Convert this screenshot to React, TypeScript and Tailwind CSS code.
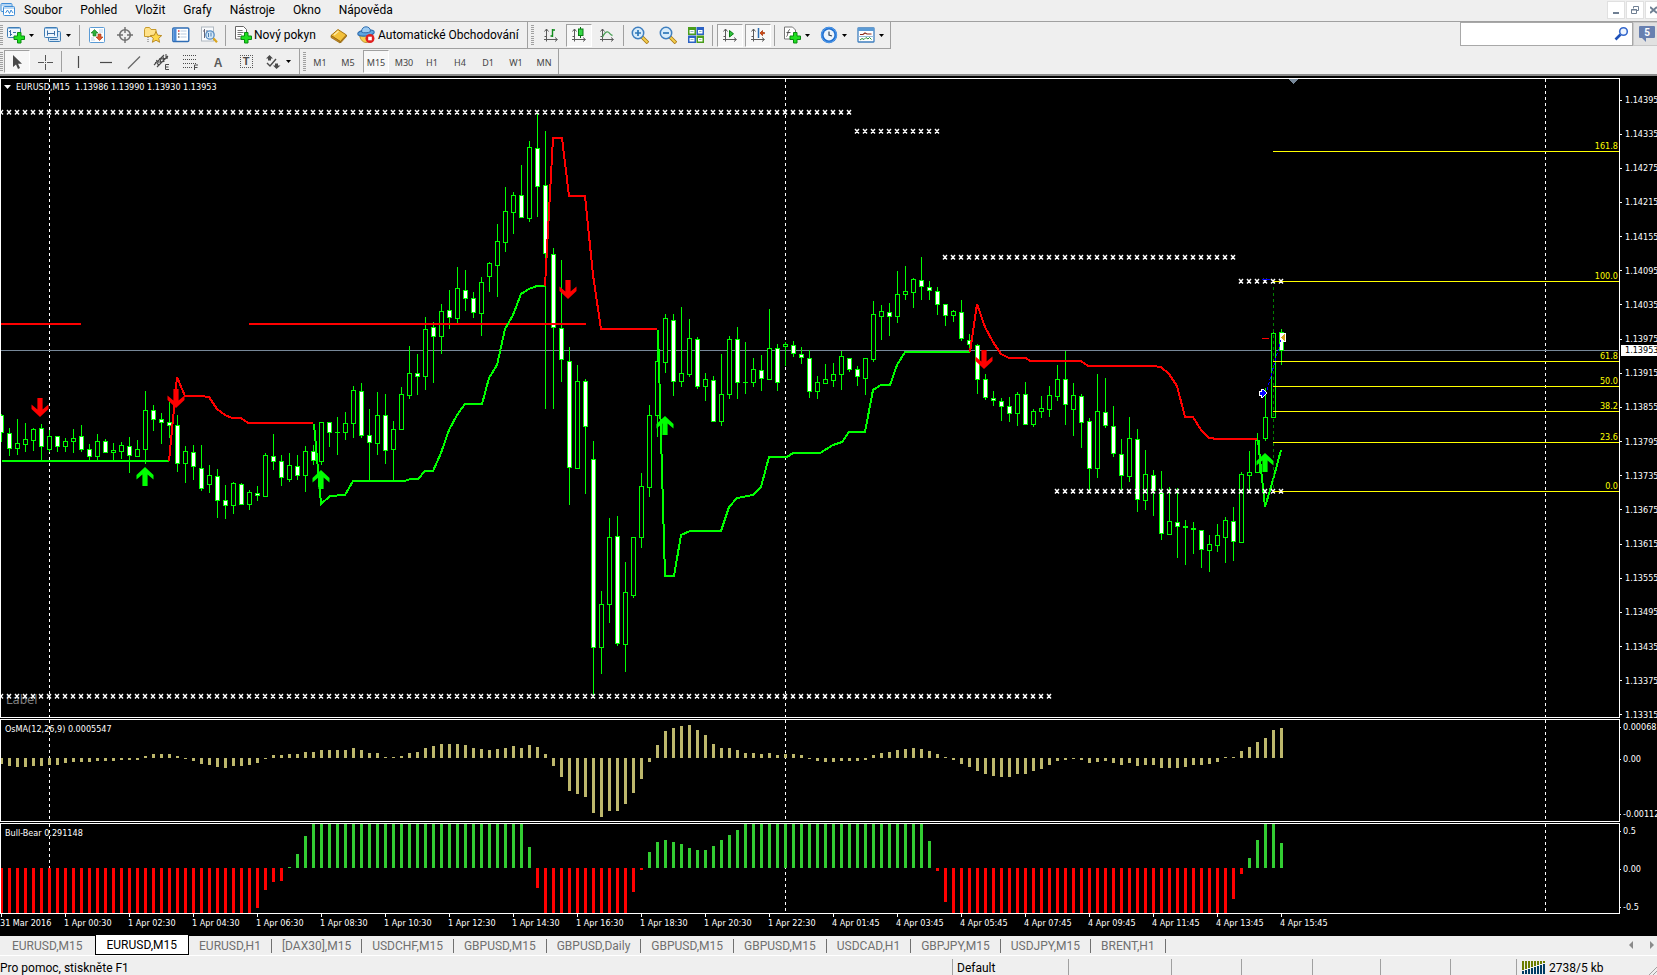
import { ReactNode } from "react";

/* ---------- chart data ---------- */

const STEP = 8;
const barX = (i: number) => 1 + i * STEP;

// high, body top, body bottom, low, bearish
const CANDLES: number[][] = [
  [414,415,432,441,1],[428,433,448,455,1],[419,443,448,454,0],[423,439,444,451,0],[428,429,440,450,0],
  [424,428,446,460,1],[430,436,449,451,0],[436,436,446,451,1],[438,441,446,451,0],[429,438,441,452,0],
  [425,436,449,451,1],[444,449,456,460,1],[434,441,456,460,0],[439,441,452,452,1],[443,450,452,459,0],
  [442,445,451,458,0],[437,446,455,472,1],[440,449,456,456,0],[391,410,449,463,0],[405,410,419,430,1],
  [413,419,422,443,1],[402,422,425,437,1],[415,425,463,471,1],[446,451,463,482,0],[445,452,466,479,1],
  [445,468,488,490,1],[465,475,484,492,0],[469,476,500,517,1],[485,500,505,518,1],[482,483,505,513,0],
  [483,484,504,504,1],[490,492,504,509,0],[486,493,495,500,1],[453,455,496,496,0],[434,456,461,469,1],
  [455,461,477,485,1],[453,465,479,481,0],[455,466,475,479,1],[446,451,475,491,0],[445,451,460,464,1],
  [422,422,461,464,0],[422,422,432,446,1],[417,432,432,454,0],[412,423,432,439,0],[386,390,423,437,0],
  [383,391,435,437,1],[409,435,442,481,1],[392,415,443,454,0],[394,415,450,463,1],[421,429,449,481,0],
  [387,394,429,429,0],[346,373,395,398,0],[354,373,376,394,1],[317,329,376,389,0],[322,327,336,382,1],
  [304,311,336,353,0],[290,310,317,328,1],[267,288,318,323,0],[270,290,298,310,1],[292,298,312,317,1],
  [277,282,313,335,0],[262,263,276,291,0],[224,241,265,296,0],[187,211,242,251,0],[192,195,212,233,0],
  [165,195,217,217,1],[141,147,218,221,0],[113,148,186,216,1],[131,185,253,408,1],[248,254,327,408,1],
  [260,328,359,381,1],[347,361,467,504,1],[365,381,468,468,0],[379,381,426,493,1],[441,459,647,696,1],
  [591,604,647,673,0],[518,537,604,622,0],[516,536,643,645,1],[562,592,644,671,0],[537,537,595,597,0],
  [473,486,537,547,0],[405,415,487,496,0],[345,361,415,436,0],[314,318,362,372,0],[314,320,381,395,1],
  [307,373,381,386,0],[319,338,374,376,0],[337,339,386,388,1],[373,379,386,400,0],[376,380,421,421,1],
  [354,394,421,425,0],[336,339,394,398,0],[327,339,382,398,1],[342,382,382,393,0],[358,369,382,386,0],
  [355,370,378,390,1],[309,348,379,379,0],[344,348,382,390,1],[342,344,346,365,0],[341,345,353,356,1],
  [347,354,357,363,1],[350,358,391,397,1],[376,382,391,398,0],[364,379,383,383,0],[363,374,380,386,0],
  [351,356,374,389,0],[358,358,369,371,1],[366,369,376,385,1],[358,358,378,394,0],[301,314,359,361,0],
  [305,311,316,339,0],[303,312,316,335,1],[271,294,316,322,0],[266,291,294,299,0],[278,279,292,307,0],
  [257,280,286,299,1],[281,287,290,299,1],[287,291,304,314,1],[304,304,315,325,1],[310,311,315,321,0],
  [300,312,338,340,1],[334,340,344,352,1],[344,345,379,393,1],[374,379,397,399,1],[391,398,400,405,1],
  [398,401,406,420,1],[397,406,413,421,1],[392,394,413,425,0],[382,394,424,424,1],[409,411,424,426,0],
  [396,408,411,417,0],[386,395,409,416,0],[365,379,396,400,0],[351,379,404,424,1],[383,395,409,435,0],
  [394,396,422,447,1],[418,421,468,490,1],[374,411,468,477,0],[378,412,425,427,1],[406,426,453,456,1],
  [439,454,475,490,1],[417,438,476,481,0],[429,439,499,511,1],[450,474,500,509,0],[470,475,490,515,1],
  [471,493,533,539,1],[487,521,534,534,0],[488,522,526,557,1],[520,526,527,564,0],[522,528,529,553,0],
  [530,530,549,567,1],[535,544,550,571,0],[524,535,545,551,0],[517,520,537,562,0],[507,521,541,560,1],
  [472,474,542,542,0],[451,472,475,489,0],[433,440,472,472,0],[388,417,438,440,0],[332,333,417,417,0],
  [329,332,350,364,1],
];

const OSMA: number[] = [
  -6,-8,-9,-9,-8,-8,-7,-7,-5,-4,-4,-4,-3,-3,-3,-2,-2,-2,2,4,4,4,2,-1,-3,-6,-7,-9,-10,-8,-8,-7,-5,-1,3,3,4,4,6,6,
  8,8,8,8,10,8,5,5,1,1,2,5,6,10,12,14,14,14,13,10,9,8,9,10,12,10,13,11,4,-8,-19,-33,-36,-39,-55,-59,-53,-53,-46,-35,
  -21,-4,13,27,30,32,33,28,23,14,10,10,8,5,5,4,5,3,4,4,3,-1,-3,-4,-4,-3,-3,-3,-2,3,5,6,8,9,10,9,7,4,1,-2,
  -6,-9,-13,-16,-18,-19,-19,-16,-16,-13,-11,-7,-3,-2,-1,-2,-5,-4,-3,-5,-7,-5,-8,-7,-7,-10,-10,-10,-9,-7,-7,-6,-4,1,1,7,
  11,16,20,28,30,
];

const fill = (n: number, v: number) => Array<number>(n).fill(v);
const BULL_BEAR: number[] = [
  ...fill(32, -45), -40, -22, -14, -13, 1, 14, 32, ...fill(27, 44), 21, -20, ...fill(11, -45), -24, -2,
  16, 26, 28, 26, 24, 20, 18, 18, 22, 28, 33, 38, ...fill(23, 44), 27, -3, -34, ...fill(35, -45), -31, -6,
  10, 28, 44, 44, 25,
];

const TREND: { color: string; points: string }[] = [
  { color: "#00ff00", points: "2,461 169,461" },
  { color: "#ff0000", points: "169,461 177,377 185,396 201,396 209,397 217,409 225,415 232,418 241,418 248,423 313,423" },
  { color: "#00ff00", points: "314,424 321,504 330,496 345,495 353,481 405,481 410,479 418,479 425,471 433,471 441,453 449,430 457,415 465,404 482,404 489,378 497,365 505,329 513,315 521,294 529,289 537,286 545,286" },
  { color: "#ff0000", points: "545,286 553,138 562,138 569,196 585,196 593,275 601,329 657,329" },
  { color: "#00ff00", points: "658,330 665,576 674,576 681,535 690,531 721,531 729,507 737,498 753,495 761,487 769,457 787,457 793,453 820,453 833,445 842,442 849,432 865,432 873,390 881,385 890,385 897,365 905,352 969,352" },
  { color: "#ff0000", points: "970,352 977,304 985,327 993,342 1001,354 1009,358 1026,358 1030,361 1081,361 1088,366 1153,366 1161,367 1169,374 1177,386 1185,417 1193,417 1201,430 1209,438 1218,439 1257,439" },
  { color: "#00ff00", points: "1258,440 1265,507 1273,480 1281,450" },
];

// y, first x, last x
const CROSS_ROWS = [
  [112, 1, 849],
  [131, 857, 937],
  [257, 945, 1233],
  [281, 1241, 1281],
  [696, 1, 1049],
  [491, 1057, 1281],
];

const FIB: [number, string][] = [
  [151, "161.8"], [281, "100.0"], [361, "61.8"], [386, "50.0"], [411, "38.2"], [442, "23.6"], [491, "0.0"],
];

const SIGNALS: [number, number, "up" | "down"][] = [
  [40, 398, "down"], [176, 389, "down"], [568, 280, "down"], [984, 350, "down"],
  [145, 467, "up"], [321, 470, "up"], [665, 416, "up"], [1265, 453, "up"],
];

const PRICES = Array.from({ length: 19 }, (_, i) => (1.14395 - i * 0.0006).toFixed(5));

const TIMES = [
  "31 Mar 2016", "1 Apr 00:30", "1 Apr 02:30", "1 Apr 04:30", "1 Apr 06:30", "1 Apr 08:30", "1 Apr 10:30",
  "1 Apr 12:30", "1 Apr 14:30", "1 Apr 16:30", "1 Apr 18:30", "1 Apr 20:30", "1 Apr 22:30", "4 Apr 01:45",
  "4 Apr 03:45", "4 Apr 05:45", "4 Apr 07:45", "4 Apr 09:45", "4 Apr 11:45", "4 Apr 13:45", "4 Apr 15:45",
];

const DAY_LINES = [48, 784, 1544];

/* ---------- chart drawing ---------- */

function DayLines() {
  return (
    <>
      {DAY_LINES.map((x) => (
        <line key={x} x1={x + 0.5} x2={x + 0.5} y1="0" y2="100%" stroke="#fff" strokeDasharray="3 3" />
      ))}
    </>
  );
}

function PriceChart() {
  return (
    <svg className="block h-full w-full" shapeRendering="crispEdges" role="img" aria-label="EURUSD M15">
      <DayLines />
      <text x="5" y="625" fontSize="13" fill="#808080">Label</text>
      <g transform="translate(-1 -79)">
        <line x1="0" x2="100%" y1="350.5" y2="350.5" stroke="#778899" />
        {CANDLES.map(([h, t, b, l, bear], i) => {
          const x = barX(i);
          return (
            <g key={i} stroke="#00ff00">
              <line x1={x + 0.5} x2={x + 0.5} y1={h} y2={l + 1} />
              {b > t ? (
                <rect x={x - 1.5} y={t + 0.5} width="4" height={b - t} fill={bear ? "#fff" : "#000"} />
              ) : (
                <line x1={x - 2} x2={x + 3} y1={t + 0.5} y2={t + 0.5} />
              )}
            </g>
          );
        })}
        <path d="M1 324H81M249 324H586" stroke="#ff0000" strokeWidth="2" />
        {TREND.map((l) => (
          <polyline key={l.points} points={l.points} fill="none" stroke={l.color} strokeWidth="2" />
        ))}
        {SIGNALS.map(([x, y, dir]) => (
          <path
            key={x}
            shapeRendering="auto"
            transform={dir === "up" ? `translate(${x} ${y})` : `translate(${x} ${y + 19}) scale(1 -1)`}
            d="M0 0L8.5 8V12.5L2.6 7.5V19H-2.6V7.5L-8.5 12.5V8Z"
            fill={dir === "up" ? "#00ff00" : "#ff0000"}
          />
        ))}
        <line x1="1273.5" x2="1273.5" y1="281" y2="491" stroke="#008000" strokeDasharray="3 3" />
        {FIB.map(([y, label]) => (
          <g key={label}>
            <svg x="1273" y={y} width="100%" height="1" overflow="hidden">
              <rect width="100%" height="1" fill="#ffff00" />
            </svg>
            <text x="100%" y={y - 2} textAnchor="end" fontSize="9" fill="#ffff00">{label}</text>
          </g>
        ))}
        {CROSS_ROWS.map(([y, from, to]) => {
          const xs: number[] = [];
          for (let x = from; x <= to; x += STEP) xs.push(x);
          return (
            <path
              key={y}
              shapeRendering="auto"
              d={xs.map((x) => `M${x - 2} ${y - 2}l4 4.500M${x + 2} ${y - 2}l-4 4.500`).join("")}
              stroke="#fff"
              strokeWidth="1.4"
            />
          );
        })}
        <path d="M1262 338.5h7" stroke="#ff0000" />
        <path d="M1262 279.5h8" stroke="#0000ff" />
        <path d="M1267 390L1281 340" stroke="#0000ff" strokeDasharray="3 2" />
        <path d="M1259 391h2v-2h2l4 4-4 4h-2v-2h-2z" fill="#0000ff" stroke="#fff" />
        <path d="M1281 333h5v9h-5z" fill="#fff" />
        <path d="M1285 334v7l-4-3.500z" fill="#daa520" />
        <path d="M1289 79h9l-4.500 5z" fill="#778899" />
      </g>
    </svg>
  );
}

function Histogram({ values, zero, up, down, label }: { values: number[]; zero: number; up: string; down: string; label: string }) {
  return (
    <svg className="block h-full w-full" shapeRendering="crispEdges" role="img" aria-label={label}>
      <DayLines />
      {values.map((v, i) => (
        <rect
          key={i}
          x={barX(i) - 2}
          y={v > 0 ? zero - v : zero}
          width="3"
          height={Math.abs(v)}
          fill={v > 0 ? up : down}
        />
      ))}
    </svg>
  );
}

/* ---------- toolbar icons ---------- */

function Ico({ children, size = 18 }: { children: ReactNode; size?: number }) {
  return (
    <svg width={size} height={size} viewBox="0 0 18 18" fill="none" className="shrink-0" aria-hidden="true">
      {children}
    </svg>
  );
}

const Plus = () => (
  <path d="M10.500 6.500h3.500v3.500h3.500v3.500h-3.500v3.500h-3.500v-3.500h-3.500v-3.500h3.500z" fill="#1fe01f" stroke="#0a8a12" />
);
const Axes = () => (
  <path d="M4.500 3v12.500M2 13.500h13M2.500 5.500l2-2.500 2 2.500M13 11.500l2.500 2-2.500 2M2.500 10.500h2" stroke="#5a5a5a" />
);

const icons: Record<string, ReactNode> = {
  newChart: (
    <Ico>
      <rect x=".5" y="1.500" width="13" height="10" rx="1" fill="#eef6fd" stroke="#3f7db5" />
      <path d="M1 2.500h12" stroke="#8fb9e0" />
      <path d="M3.500 4v6M2 5.500h1.500M3.500 8.500H5M6 6.500h3" stroke="#3b6ea5" />
      <Plus />
    </Ico>
  ),
  profiles: (
    <Ico>
      <rect x="4.500" y="5.500" width="12" height="10" rx="1" fill="#d4e6f6" stroke="#3f7db5" />
      <rect x=".5" y="1.500" width="13" height="10" rx="1" fill="#eef6fd" stroke="#3f7db5" />
      <path d="M1 2.500h12" stroke="#8fb9e0" />
      <path d="M3.500 4.500v5M3.500 7.500h7M10.500 5v4.500M6 13.500h8" stroke="#3b6ea5" />
    </Ico>
  ),
  market: (
    <Ico>
      <rect x="1.500" y="1.500" width="15" height="15" rx="1" fill="#fff" stroke="#5b9bd5" />
      <path d="M6.500 3.500l3.500 3.500H8v3H5V7H3z" fill="#2fae3a" stroke="#14781d" strokeWidth=".6" />
      <path d="M11.500 14.500L15 11h-2V8h-3v3H8z" fill="#e2572b" stroke="#a5320f" strokeWidth=".6" />
      <path d="M11 4h4M11 6h4M3 12h3M3 14h4" stroke="#bcd3ea" />
    </Ico>
  ),
  target: (
    <Ico>
      <circle cx="9" cy="9" r="5.300" stroke="#707070" strokeWidth="1.600" />
      <path d="M9 1v6M9 11v6M1 9h6M11 9h6" stroke="#707070" strokeWidth="1.400" />
    </Ico>
  ),
  favorites: (
    <Ico>
      <path d="M.5 3.500l1-2h4l1.500 2h5v7h-11.500z" fill="#ffe28a" stroke="#c79a2c" />
      <path d="M4 11v6" stroke="#666" strokeDasharray="1 1" />
      <path d="M12 5.500l1.700 3.700 4 .4-3 2.700.9 4-3.600-2.100-3.600 2.100.9-4-3-2.700 4-.4z" fill="#ffd84a" stroke="#b5831a" strokeWidth=".9" />
    </Ico>
  ),
  list: (
    <Ico>
      <rect x=".8" y="2" width="16" height="13.500" rx="1" fill="#fff" stroke="#2f6db5" strokeWidth="1.400" />
      <path d="M3 2.500v12.500" stroke="#4b8ad6" strokeWidth="3" />
      <path d="M6 5h1.500" stroke="#e03131" strokeWidth="1.500" />
      <path d="M6 8h1.500M6 11h1.500" stroke="#222" />
      <path d="M8.500 5h6M8.500 8h6M8.500 11h6" stroke="#b9cbe0" />
    </Ico>
  ),
  tester: (
    <Ico>
      <rect x="1.500" y="1" width="12" height="14" fill="#f8fafc" stroke="#b0b8c0" />
      <path d="M4.500 3v9M3 5h1.500M7 4v4" stroke="#667" />
      <circle cx="10" cy="9" r="4.200" fill="#cfe5f8" fillOpacity=".85" stroke="#5b8fc4" strokeWidth="1.300" />
      <path d="M8.500 7v4M11 6.500v4" stroke="#4b7db0" />
      <path d="M13.300 12.300l3.700 4" stroke="#d9a520" strokeWidth="2.200" />
    </Ico>
  ),
  order: (
    <Ico>
      <path d="M1.500.5h8l3 3V13h-11z" fill="#fff" stroke="#666" />
      <path d="M3.500 4.500h5M3.500 6.500h6M3.500 8.500h4M3.500 10.500h3" stroke="#777" />
      <Plus />
    </Ico>
  ),
  book: (
    <Ico>
      <path d="M1 9.500L8 3.500l8.500 5.500-6 6.500z" fill="#f3c13a" stroke="#a87512" />
      <path d="M1 9.500v2l9 5.500v-1.500zM10.500 15.500v1.500l6-6.500V9z" fill="#c98a1a" stroke="#8f6410" strokeWidth=".7" />
      <path d="M4 9l4.500-4" stroke="#ffe9a3" strokeWidth="1.500" />
    </Ico>
  ),
  expert: (
    <Ico>
      <path d="M2.500 8c0 4 2.500 8.500 6.500 8.500s6-3 6-8.500z" fill="#f5cf4e" stroke="#b5831a" strokeWidth=".8" />
      <ellipse cx="9" cy="7" rx="8.300" ry="3" fill="#5fa5e0" stroke="#2f6dae" transform="rotate(-6 9 7)" />
      <path d="M4.500 6C4.500 2.500 6.500.8 9 .8s4.500 1.500 4.500 4.700c-2 1.500-7 1.800-9 .5z" fill="#9ccbf2" stroke="#2f6dae" />
      <circle cx="13" cy="12.500" r="4.500" fill="#e02020" />
      <rect x="11.200" y="10.700" width="3.600" height="3.600" fill="#fff" />
    </Ico>
  ),
  bars: (
    <Ico>
      <Axes />
      <path d="M10.500 3v8M8.500 10h2M10.500 4h2.500" stroke="#118a1c" strokeWidth="1.400" />
    </Ico>
  ),
  candles: (
    <Ico>
      <Axes />
      <path d="M10.500 1v11" stroke="#0b6b14" />
      <rect x="8.500" y="3" width="4.500" height="6.500" fill="#35d845" stroke="#0b7d16" />
    </Ico>
  ),
  line: (
    <Ico>
      <Axes />
      <path d="M4.500 11C6.500 7 8.500 5.500 10 6s2 3 4.500 3.500" stroke="#4aa055" strokeWidth="1.300" />
    </Ico>
  ),
  zoomIn: (
    <Ico>
      <path d="M11 11l6 6" stroke="#a87512" strokeWidth="3.600" />
      <path d="M11 11l5.500 5.500" stroke="#f3cf50" strokeWidth="2" />
      <circle cx="7" cy="7" r="5.700" fill="#d8ecfa" stroke="#3f7fbf" strokeWidth="1.500" />
      <path d="M7 4v6M4 7h6" stroke="#2f78b8" strokeWidth="1.700" />
    </Ico>
  ),
  zoomOut: (
    <Ico>
      <path d="M11 11l6 6" stroke="#a87512" strokeWidth="3.600" />
      <path d="M11 11l5.500 5.500" stroke="#f3cf50" strokeWidth="2" />
      <circle cx="7" cy="7" r="5.700" fill="#d8ecfa" stroke="#3f7fbf" strokeWidth="1.500" />
      <path d="M4 7h6" stroke="#2f78b8" strokeWidth="1.700" />
    </Ico>
  ),
  tiles: (
    <Ico>
      <path d="M1 1h8v8H1zM9.500 9.500h7.500v7.500H9.500z" fill="#4a9e1c" />
      <path d="M9.500 1h7.500v8H9.500zM1 9.500h8v7.500H1z" fill="#2b62c4" />
      <path d="M2.500 4h5v3.500h-5zM11 4h4.500v3.500H11zM2.500 12h5v3.500h-5zM11 12h4.500v3.500H11z" fill="#fff" />
      <path d="M3.500 5.500h3M12 5.500h2.500M3.500 13.500h3M12 13.500h2.500" stroke="#9bb" />
    </Ico>
  ),
  autoScroll: (
    <Ico>
      <Axes />
      <path d="M8.500 4.500v6.500l4-3.200z" fill="#2fc43c" stroke="#0b7d16" />
    </Ico>
  ),
  shift: (
    <Ico>
      <Axes />
      <path d="M9.500 2v10" stroke="#2b6cb0" strokeWidth="1.500" />
      <path d="M11 7l2.500-2.500V6.500h2v1.200h-2v2z" fill="#d9480f" stroke="#a8380c" strokeWidth=".8" />
    </Ico>
  ),
  indicators: (
    <Ico>
      <path d="M1.500 1h8l3 3v9h-11z" fill="#fff" stroke="#777" />
      <path d="M3.500 10.500c1.500 0 1-7 3.500-7M3.500 6.500h4" stroke="#555" />
      <Plus />
    </Ico>
  ),
  clock: (
    <Ico>
      <circle cx="9" cy="9" r="8.200" fill="#1f6fd0" />
      <circle cx="9" cy="9" r="7.400" stroke="#5aa2ee" />
      <circle cx="9" cy="9" r="5.400" fill="#eef5fc" />
      <path d="M9 5.500V9l3 1" stroke="#345" strokeWidth="1.200" />
    </Ico>
  ),
  template: (
    <Ico>
      <rect x="1" y="2" width="16" height="14" rx=".5" fill="#fff" stroke="#3f7fbf" strokeWidth="1.300" />
      <path d="M1 3.500h16" stroke="#5b9bd5" strokeWidth="3" />
      <path d="M3 8.500h3l2-1.500 2 1h4.500" stroke="#8c2b1a" strokeWidth="1.200" />
      <path d="M1.500 10.500h15" stroke="#9bbcdc" />
      <path d="M3 14l2-1.500 2 1 2-2 2 1.500 1.500-1.500 2 2" stroke="#2a9134" />
    </Ico>
  ),
  cursor: (
    <Ico>
      <path d="M5 2v12l3-2.500 2 4.500 2-1-2-4.300h4z" fill="#4a4a4a" />
    </Ico>
  ),
  cross: (
    <Ico>
      <path d="M9.500 2v6M9.500 11v6M2 9.500h6M11 9.500h6" stroke="#555" />
      <path d="M9 9h1v1H9z" fill="#555" />
    </Ico>
  ),
  vline: <Ico><path d="M9.500 3v12" stroke="#4a4a4a" strokeWidth="1.200" /></Ico>,
  hline: <Ico><path d="M3 9.500h12" stroke="#4a4a4a" strokeWidth="1.200" /></Ico>,
  trend: <Ico><path d="M3 15.500L15 3.500" stroke="#666" strokeWidth="1.300" /></Ico>,
  channel: (
    <Ico>
      <path d="M1 12L11 2M4 14L15 3M3.500 7l2 6M7 5l1 6M10 3l1 6M13 1l0 5M2 9.500l9-1M6 6l9-1" stroke="#4a4a4a" strokeWidth="1.100" />
      <path d="M16 11.500h-3.500v5H16M12.500 14h3" stroke="#4a4a4a" />
    </Ico>
  ),
  fibo: (
    <Ico>
      <path d="M2 2.500h14M2 6.500h14M2 10.500h14M2 14.500h9" stroke="#4a4a4a" strokeDasharray="1 1" />
      <path d="M13.500 17v-5H17M13.500 14.500h3" stroke="#4a4a4a" />
    </Ico>
  ),
  shapes: (
    <Ico>
      <path d="M5.500 2L9 5.500H7v2H4v-2H2zM12.500 16L9 12.500h2v-2h3v2h2.500z" fill="#4a4a4a" />
      <path d="M3 10l3 3 6-7" stroke="#4a4a4a" strokeWidth="1.400" />
    </Ico>
  ),
};

/* ---------- chrome ---------- */

const Caret = () => (
  <svg width="5" height="3" viewBox="0 0 5 3" className="shrink-0" aria-hidden="true">
    <path d="M0 0h5L2.500 3z" fill="#000" />
  </svg>
);

const Sep = ({ className = "mx-1" }: { className?: string }) => (
  <span className={`h-[21px] w-px shrink-0 bg-[#a0a0a0] ${className}`} />
);

const Grip = () => (
  <span className="flex h-5 w-[3px] shrink-0 flex-col justify-between">
    {Array.from({ length: 10 }, (_, i) => (
      <span key={i} className="h-px w-full bg-[#a0a0a0]" />
    ))}
  </span>
);

function Tool({ icon, label, pressed }: { icon: string; label: string; pressed?: boolean }) {
  return (
    <button
      type="button"
      aria-label={label}
      className={
        pressed
          ? "mx-px flex h-[23px] w-[26px] shrink-0 items-center justify-center border border-[#a0a0a0] border-r-white border-b-white bg-[#f7f7f7]"
          : "flex h-[23px] w-7 shrink-0 items-center justify-center"
      }
    >
      {icons[icon]}
    </button>
  );
}

function MenuTool({ icon, label }: { icon: string; label: string }) {
  return (
    <button type="button" aria-label={label} className="flex h-[23px] w-[37px] shrink-0 items-center gap-1 pl-1">
      {icons[icon]}
      <Caret />
    </button>
  );
}

const MENU = ["Soubor", "Pohled", "Vložit", "Grafy", "Nástroje", "Okno", "Nápověda"];
const PERIODS = ["M1", "M5", "M15", "M30", "H1", "H4", "D1", "W1", "MN"];
const TABS = [
  "EURUSD,M15", "EURUSD,M15", "EURUSD,H1", "[DAX30],M15", "USDCHF,M15", "GBPUSD,M15", "GBPUSD,Daily",
  "GBPUSD,M15", "GBPUSD,M15", "USDCAD,H1", "GBPJPY,M15", "USDJPY,M15", "BRENT,H1",
];

function MenuBar() {
  return (
    <header className="flex h-[21px] items-start bg-[#efefef] pt-px">
      <svg width="16" height="16" viewBox="0 0 16 16" fill="none" className="shrink-0" aria-hidden="true">
        <rect x="1" y="2.500" width="11" height="8" rx="1" fill="#eef6fd" stroke="#3f8ed8" />
        <rect x="3.500" y="5.500" width="11" height="9" rx="1" fill="#fff" stroke="#3f8ed8" />
        <path d="M1 4h11M4 7h10" stroke="#7fb5e8" />
        <path d="M5.500 12l2-3 2 3.500 1.500-3.500 2 3" stroke="#3f8ed8" />
      </svg>
      <nav className="flex flex-1 gap-[18px] pl-2 text-xs leading-[18px]">
        {MENU.map((m) => (
          <button key={m} type="button">{m}</button>
        ))}
      </nav>
      <div className="flex gap-px">
        <button type="button" aria-label="Minimalizovat" className="flex h-[18px] w-[18px] items-center justify-center border border-[#e0e0e0] bg-white">
          <svg width="10" height="10"><path d="M2 8h6" stroke="#6f7f93" strokeWidth="2" /></svg>
        </button>
        <button type="button" aria-label="Obnovit" className="flex h-[18px] w-[18px] items-center justify-center border border-[#e0e0e0] bg-white">
          <svg width="10" height="10" fill="none">
            <path d="M3.500 3.500v-2h5v4h-2" stroke="#6f7f93" />
            <path d="M1.500 4.500h5v4h-5zM1 5h6" stroke="#6f7f93" />
          </svg>
        </button>
        <button type="button" aria-label="Zavřít" className="flex h-[18px] w-3 items-center justify-end border border-r-0 border-[#e0e0e0] bg-white">
          <svg width="7" height="8"><path d="M0 1l7 6M7 1L0 7" stroke="#6f7f93" strokeWidth="2" /></svg>
        </button>
      </div>
    </header>
  );
}

function MainToolbar() {
  return (
    <div className="flex h-[28px] items-start border-t border-[#a0a0a0] bg-[#efefef]">
      <div className="flex h-[27px] items-center border-r border-b border-[#a0a0a0]">
        <Grip />
        <MenuTool icon="newChart" label="Nový graf" />
        <MenuTool icon="profiles" label="Profily" />
        <Sep className="mr-[3px] ml-[2px]" />
        <Tool icon="market" label="Tržní nabídka" />
        <Tool icon="target" label="Datové okno" />
        <Tool icon="favorites" label="Navigátor" />
        <Tool icon="list" label="Terminál" />
        <Tool icon="tester" label="Tester strategií" />
        <Sep className="mr-2 ml-[2px]" />
        <button type="button" className="flex h-[23px] w-[91px] shrink-0 items-center gap-[2px] text-xs whitespace-nowrap">
          {icons.order}
          Nový pokyn
        </button>
        <Tool icon="book" label="MetaEditor" />
        <button type="button" className="flex h-[23px] w-[174px] shrink-0 items-center gap-[3px] pl-1 text-xs whitespace-nowrap">
          {icons.expert}
          Automatické Obchodování
        </button>
      </div>
      <div className="flex h-[27px] items-center border-r border-b border-[#a0a0a0] pl-[3px]">
        <Grip />
        <span className="w-[3px]" />
        <Tool icon="bars" label="Sloupcový graf" />
        <Tool icon="candles" label="Svíčkový graf" pressed />
        <Tool icon="line" label="Čárový graf" />
        <Sep className="mx-[2px]" />
        <Tool icon="zoomIn" label="Přiblížit" />
        <Tool icon="zoomOut" label="Oddálit" />
        <Tool icon="tiles" label="Dlaždice" />
        <Sep className="mr-[3px] ml-[2px]" />
        <Tool icon="autoScroll" label="Automatický posun" pressed />
        <Tool icon="shift" label="Odsazení grafu" pressed />
        <Sep className="mr-1 ml-[2px]" />
        <MenuTool icon="indicators" label="Indikátory" />
        <MenuTool icon="clock" label="Periody" />
        <MenuTool icon="template" label="Šablony" />
      </div>
      <span className="flex-1" />
      <div className="flex h-[24px] w-[173px] shrink items-center border border-[#a8a8a8] bg-white">
        <input aria-label="Hledat" className="h-full min-w-0 flex-1 bg-transparent px-1 text-xs outline-none" />
        <svg width="16" height="16" viewBox="0 0 16 16" fill="none" className="mr-[2px]" aria-hidden="true">
          <path d="M1.500 13.500l5-5" stroke="#1e50b8" strokeWidth="2.600" />
          <circle cx="9.500" cy="5.500" r="3.800" fill="#eef5ff" stroke="#3568cc" strokeWidth="1.600" />
        </svg>
      </div>
      <button type="button" aria-label="Zprávy" className="flex h-[24px] w-6 shrink-0 items-center justify-end border border-r-0 border-[#c8c8c8] bg-[#e1e1e1] pr-[2px]">
        <svg width="16" height="16" viewBox="0 0 16 16" className="overflow-visible">
          <path d="M1 0h14q1 0 1 1v10q0 1-1 1H7v4l-4-4H1q-1 0-1-1V1q0-1 1-1z" fill="#6880b0" />
          <text x="8" y="10" fontSize="10" fontWeight="700" textAnchor="middle" fill="#fff">5</text>
        </svg>
      </button>
    </div>
  );
}

function LineToolbar() {
  return (
    <div className="flex h-[27px] items-start border-b-2 border-[#8c8c8c] bg-[#efefef]">
      <div className="flex h-[25px] items-center border-r border-[#a0a0a0]">
        <Grip />
        <Tool icon="cursor" label="Kurzor" pressed />
        <Tool icon="cross" label="Zaměřovač" />
        <Sep className="mx-[2px]" />
        <Tool icon="vline" label="Vertikální linie" />
        <Tool icon="hline" label="Horizontální linie" />
        <Tool icon="trend" label="Trendová linie" />
        <Tool icon="channel" label="Kanál" />
        <Tool icon="fibo" label="Fibonacci" />
        <button type="button" className="h-[23px] w-7 pt-[2px] font-['Liberation_Sans',sans-serif] text-xs font-bold text-[#5a5a5a]">A</button>
        <button type="button" className="flex h-[23px] w-7 items-center justify-center">
          <span className="h-[13px] w-[13px] border border-dotted border-[#5a5a5a] font-['Liberation_Sans',sans-serif] text-[11px] leading-[11px] font-bold text-[#4a4a4a]">T</span>
        </button>
        <MenuTool icon="shapes" label="Šipky" />
        <span className="w-[2px]" />
      </div>
      <div className="flex h-[25px] items-center border-r border-[#a0a0a0] pl-[3px] font-['Noto_Sans',sans-serif]">
        <Grip />
        {PERIODS.map((p) => (
          <button
            key={p}
            type="button"
            className={
              p === "M15"
                ? "mx-px h-[23px] w-[26px] border border-[#a0a0a0] border-r-white border-b-white bg-[#f7f7f7] pt-[2px] text-[9px] text-[#444]"
                : "h-[23px] w-7 pt-[2px] text-[9px] text-[#444]"
            }
          >
            {p}
          </button>
        ))}
      </div>
    </div>
  );
}

function PriceAxis() {
  return (
    <div className="relative -mb-1 flex w-[37px] shrink-0 flex-col justify-between overflow-hidden pt-[15px]">
      {PRICES.map((p) => (
        <div key={p} className="flex h-[14px] items-center gap-[3px] leading-[14px]">
          <span className="h-px w-[2px] shrink-0 bg-white" />
          {p}
        </div>
      ))}
      <div className="absolute top-[267px] right-0 left-px h-[11px] bg-white pl-1 leading-[11px] text-black">1.13953</div>
    </div>
  );
}

function AxisLabel({ children, className }: { children: ReactNode; className: string }) {
  return (
    <div className={`flex h-3 items-center gap-[2px] leading-3 whitespace-nowrap ${className}`}>
      <span className="h-px w-px shrink-0 bg-white" />
      {children}
    </div>
  );
}

export default function App() {
  return (
    <div className="flex h-screen min-h-[700px] flex-col overflow-hidden bg-[#efefef] font-[Roboto,sans-serif] text-black">
      <MenuBar />
      <MainToolbar />
      <LineToolbar />

      <main className="flex min-h-0 flex-1 flex-col bg-black pt-[2px] font-['DejaVu_Sans_Condensed','Noto_Sans',sans-serif] text-[9px] text-white">
        <section className="flex min-h-0 flex-1">
          <div className="relative min-w-0 flex-1 border border-white">
            <PriceChart />
            <div className="absolute top-[2px] left-[3px] flex h-3 items-center gap-[5px] leading-3 whitespace-pre">
              <svg width="7" height="4"><path d="M0 0h7L3.500 4z" fill="#fff" /></svg>
              {"EURUSD,M15  1.13986 1.13990 1.13930 1.13953"}
            </div>
          </div>
          <PriceAxis />
        </section>

        <section className="mt-px flex h-[103px] shrink-0">
          <div className="relative min-w-0 flex-1 border border-white">
            <Histogram values={OSMA} zero={38} up="#bdb76b" down="#bdb76b" label="OsMA" />
            <div className="absolute top-[3px] left-1 leading-3">OsMA(12,26,9) 0.0005547</div>
          </div>
          <div className="w-[37px] shrink-0 overflow-hidden">
            <AxisLabel className="mt-[2px]">0.00068</AxisLabel>
            <AxisLabel className="mt-5">0.00</AxisLabel>
            <AxisLabel className="mt-[43px]">-0.00112</AxisLabel>
          </div>
        </section>

        <section className="mt-px flex h-[91px] shrink-0">
          <div className="relative min-w-0 flex-1 border border-white">
            <Histogram values={BULL_BEAR} zero={44} up="#32cd32" down="#ff0000" label="Bull-Bear" />
            <div className="absolute top-[3px] left-1 leading-3">Bull-Bear 0.291148</div>
          </div>
          <div className="w-[37px] shrink-0 overflow-hidden">
            <AxisLabel className="mt-[2px]">0.5</AxisLabel>
            <AxisLabel className="mt-[26px]">0.00</AxisLabel>
            <AxisLabel className="mt-[26px]">-0.5</AxisLabel>
          </div>
        </section>

        <div className="flex h-5 shrink-0 overflow-hidden">
          {TIMES.map((t) => (
            <div key={t} className="w-16 shrink-0 whitespace-nowrap">
              <span className="ml-px block h-[3px] w-px bg-white" />
              <span className="block leading-3">{t}</span>
            </div>
          ))}
        </div>
      </main>

      <div className="flex h-[22px] shrink-0 items-start border-t-2 border-b border-t-black border-b-white text-xs">
        {TABS.map((t, i) => (
          <div key={i} className="flex shrink-0 items-center">
            <button
              type="button"
              className={
                i === 1
                  ? "-mt-px h-[20px] border border-t-0 border-black bg-white px-[11px] leading-[20px] text-black"
                  : i === 0
                    ? "h-[19px] px-3 leading-5 text-[#707070]"
                    : "h-[19px] px-[10px] leading-5 text-[#707070]"
              }
            >
              {t}
            </button>
            {i > 1 && <span className="h-[14px] w-px bg-[#707070]" />}
          </div>
        ))}
        <span className="flex-1" />
        <button type="button" aria-label="Předchozí" className="mt-1 mr-4 h-[9px] w-[5px]">
          <svg width="4" height="8"><path d="M4 0v8L0 4z" fill="#8a8a8a" /></svg>
        </button>
        <button type="button" aria-label="Další" className="mt-1 mr-[2px] h-[9px] w-[5px]">
          <svg width="4" height="8"><path d="M0 0v8l4-4z" fill="#8a8a8a" /></svg>
        </button>
      </div>

      <footer className="flex h-[19px] shrink-0 items-end text-xs leading-[19px]">
        <div className="h-4 min-w-0 flex-1">Pro pomoc, stiskněte F1</div>
        <div className="h-4 w-[116px] border-l border-[#a0a0a0] pl-1">Default</div>
        <div className="h-4 w-[103px] border-l border-[#a0a0a0]" />
        <div className="h-4 w-[70px] border-l border-[#a0a0a0]" />
        <div className="h-4 w-[71px] border-l border-[#a0a0a0]" />
        <div className="h-4 w-[68px] border-l border-[#a0a0a0]" />
        <div className="h-4 w-[70px] border-l border-[#a0a0a0]" />
        <div className="h-4 w-[66px] border-l border-[#a0a0a0]" />
        <div className="flex h-4 w-[141px] items-start gap-1 border-l border-[#a0a0a0] pl-[5px]">
          <svg width="23" height="13" className="mt-[2px]" shapeRendering="crispEdges" aria-hidden="true">
            {Array.from({ length: 8 }, (_, i) => (
              <g key={i}>
                <rect x={i * 3} y="0" width="2" height={9 - i} fill="#6b7d00" />
                <rect x={i * 3} y={10 - i} width="2" height={3 + i} fill="#003c64" />
              </g>
            ))}
          </svg>
          <span className="flex-1">2738/5 kb</span>
          <svg width="8" height="12" className="mt-1" aria-hidden="true">
            <path d="M0 12l8-8M4 12l4-4" stroke="#a0a0a0" />
          </svg>
        </div>
      </footer>
    </div>
  );
}
